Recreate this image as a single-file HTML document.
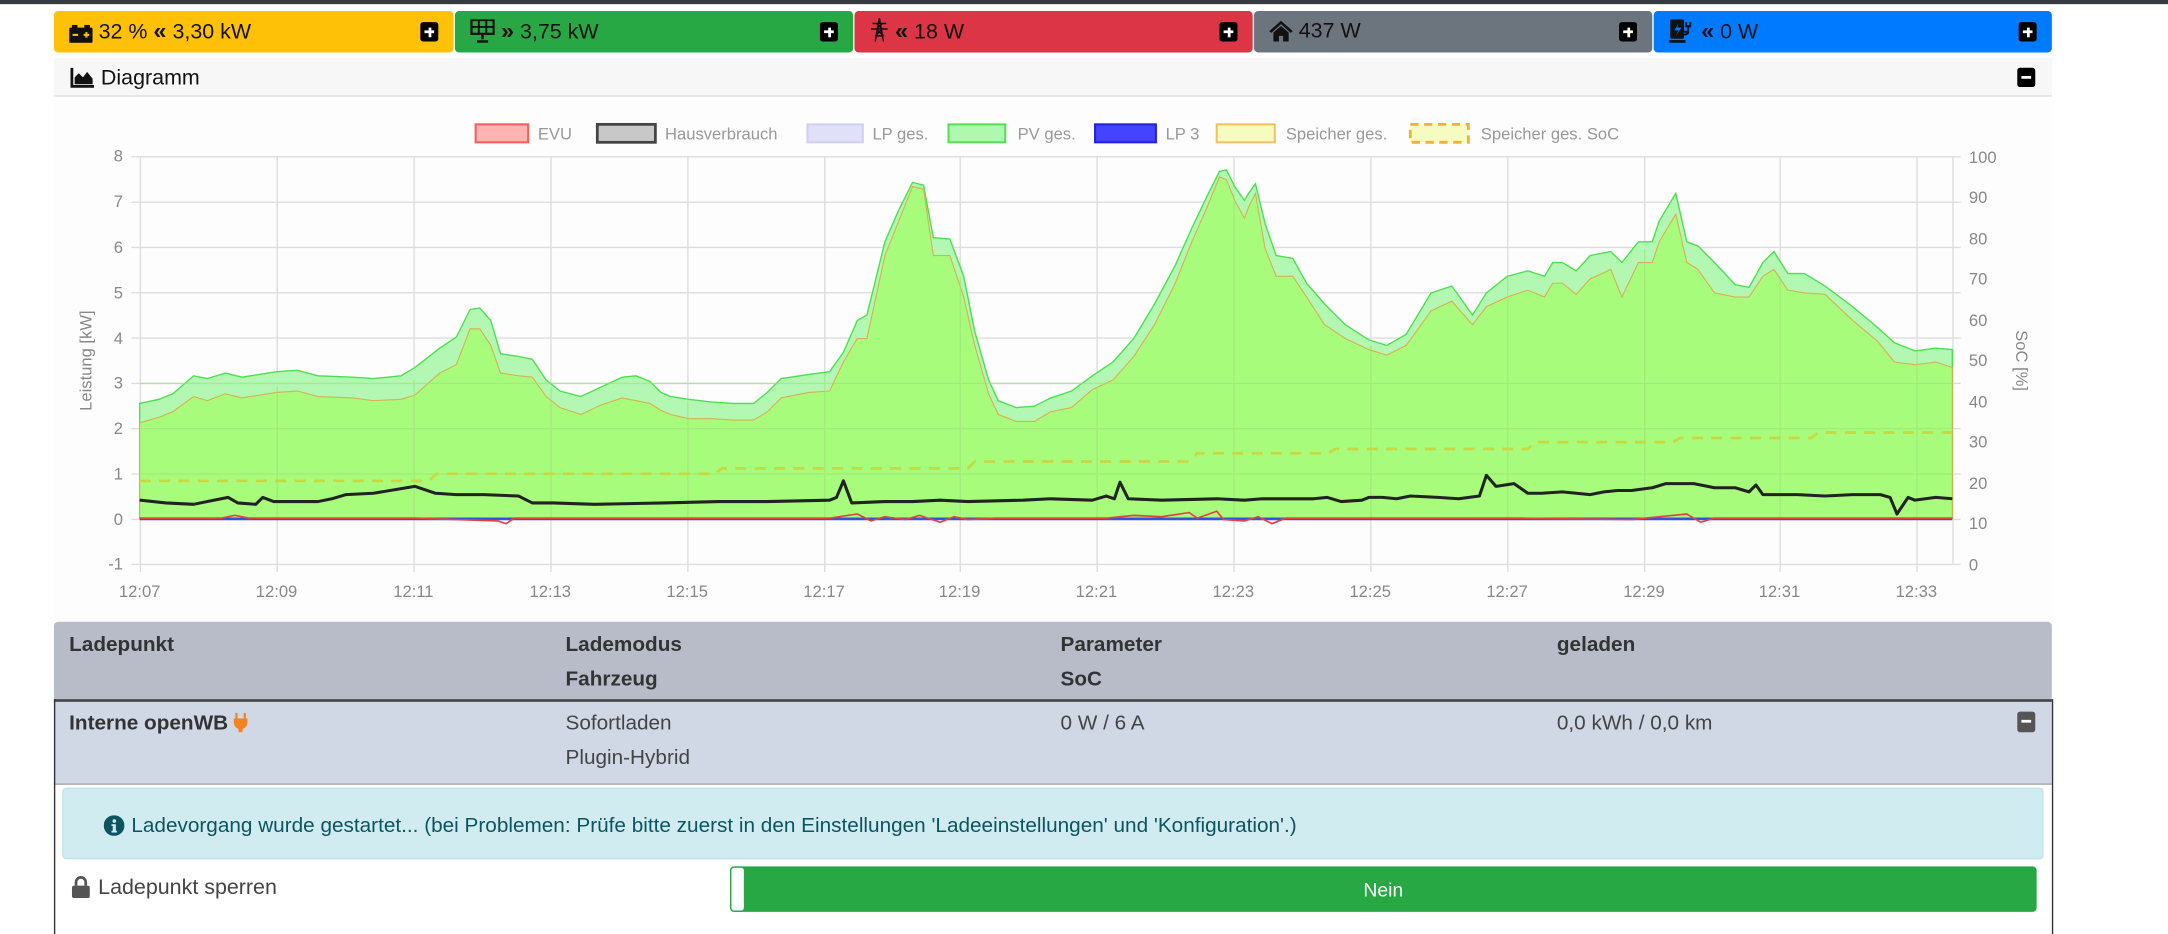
<!DOCTYPE html>
<html><head><meta charset="utf-8">
<style>
*{box-sizing:border-box;margin:0;padding:0}
html,body{width:2168px;height:934px;overflow:hidden;background:#fff;font-family:"Liberation Sans",sans-serif}
#w{position:absolute;left:0;top:0;width:1568px;height:676px;transform:scale(1.38265,1.3817);transform-origin:0 0}
.a{position:absolute}
.topbar{left:0;top:0;width:1568px;height:3px;background:#343a40}
.btn{top:8px;height:30px;border-radius:3px;font-size:15.5px;color:#111;line-height:30px;padding-left:11px;white-space:nowrap}
.btn svg{vertical-align:-3px}
.btn b{font-size:17px}
.plus{position:absolute;right:11px;top:8px;width:13px;height:14px;background:#000;border-radius:2px}
.plus:before{content:"";position:absolute;left:3px;top:6px;width:7px;height:2px;background:#fff}
.plus.p:after{content:"";position:absolute;left:5.5px;top:3.5px;width:2px;height:7px;background:#fff}
.th{font-weight:bold;color:#333;font-size:15px}
.td{color:#444;font-size:15px}
</style></head><body><div id="w">
<div class="a topbar"></div>

<div class="a btn" style="left:39px;width:289px;background:#ffc107">
<svg width="17" height="13" viewBox="0 0 17 13"><rect x="0" y="2" width="17" height="11" rx="1" fill="#111"/><rect x="2" y="0" width="4" height="3" fill="#111"/><rect x="11" y="0" width="4" height="3" fill="#111"/><rect x="2.5" y="6.5" width="4" height="1.5" fill="#ffc107"/><rect x="10.5" y="6.5" width="4" height="1.5" fill="#ffc107"/><rect x="11.75" y="5.25" width="1.5" height="4" fill="#ffc107"/></svg> 32 % <b>«</b> 3,30 kW<div class="plus p"></div></div>
<div class="a btn" style="left:329px;width:288px;background:#28a745">
<svg width="18" height="17" viewBox="0 0 18 17"><rect x="1" y="0.5" width="16" height="10" fill="none" stroke="#111" stroke-width="1.6"/><path d="M6.3 0.5v10M11.7 0.5v10M1 5.5h16" stroke="#111" stroke-width="1.4"/><path d="M9 10.5v4M5 16h8" stroke="#111" stroke-width="1.8"/></svg> <b>»</b> 3,75 kW<div class="plus p"></div></div>
<div class="a btn" style="left:618px;width:288px;background:#dc3545">
<svg width="14" height="18" viewBox="0 0 14 18"><path d="M7 0L4 17M7 0l3 17M2 4h10M1 8h12M5 4l4 4M9 4L5 8M5 8l5 5M9 8l-5 5M4 13h6" stroke="#111" stroke-width="1.1" fill="none"/></svg> <b>«</b> 18 W<div class="plus p"></div></div>
<div class="a btn" style="left:907px;width:288px;background:#6c757d">
<svg width="17" height="15" viewBox="0 0 17 15"><path d="M8.5 0L0 7.5l1.5 1.3L8.5 2.5l7 6.3L17 7.5z" fill="#111"/><path d="M3 8.5V15h4v-4h3v4h4V8.5L8.5 3.8z" fill="#111"/></svg> 437 W<div class="plus p"></div></div>
<div class="a btn" style="left:1196px;width:288px;background:#007bff">
<svg width="19" height="17" viewBox="0 0 19 17"><rect x="1" y="0" width="10" height="14" rx="1" fill="#111"/><rect x="0" y="15" width="12" height="2" fill="#111"/><path d="M7 3L4 8h3l-2 4 4-6H6z" fill="#007bff"/><path d="M11 9h3v-4M14 5h-1.5v-3M14 5h1.5v-3M14 5v4c0 2-2 2-3 2" stroke="#111" stroke-width="1.4" fill="none"/></svg> <b>«</b> 0 W<div class="plus p"></div></div>

<div class="a" style="left:39px;top:42px;width:1445px;height:28px;background:#f7f7f7;border-bottom:1px solid #ddd"></div>
<svg class="a" style="left:51px;top:49px" width="17" height="15" viewBox="0 0 17 15"><path d="M1 0v13.5h16" stroke="#111" stroke-width="2" fill="none"/><path d="M3 12V7l3-3 3 3 3-4 4 5v4z" fill="#111"/></svg>
<div class="a" style="left:73px;top:48px;font-size:15.5px;color:#111">Diagramm</div>
<div class="a plus" style="left:1459px;top:49px;right:auto"></div>

<div class="a" style="left:39px;top:70px;width:1445px;height:380px;background:#fdfdfd"></div>
<svg class="a" style="left:0;top:0" width="1568" height="676" viewBox="0 0 1568 676" font-family="Liberation Sans, sans-serif">
<g font-size="12" fill="#999">
<rect x="344" y="90" width="38" height="13" fill="#ffb3b3" stroke="#f06060" stroke-width="1.5"/><text x="389" y="101">EVU</text>
<rect x="432" y="90" width="42" height="13" fill="#c8c8c8" stroke="#444" stroke-width="2"/><text x="481" y="101">Hausverbrauch</text>
<rect x="584" y="90" width="40" height="13" fill="#e0e0f8" stroke="#d0d0f0" stroke-width="1.5"/><text x="631" y="101">LP ges.</text>
<rect x="686" y="90" width="41" height="13" fill="#b0f8b0" stroke="#55e055" stroke-width="1.5"/><text x="736" y="101">PV ges.</text>
<rect x="792" y="90" width="44" height="13" fill="#4444ff" stroke="#2222dd" stroke-width="1.5"/><text x="843" y="101">LP 3</text>
<rect x="880" y="90" width="42" height="13" fill="#f6fcc0" stroke="#f5c060" stroke-width="1.5"/><text x="930" y="101">Speicher ges.</text>
<rect x="1020" y="90" width="42" height="13" fill="#f6fcc0" stroke="#f5b030" stroke-width="2" stroke-dasharray="6,4"/><text x="1071" y="101">Speicher ges. SoC</text>
</g>
<g stroke="#ddd" stroke-width="1">
<path d="M95 113.5H1412M95 146.3H1412M95 179.1H1412M95 211.9H1412M95 244.7H1412M95 277.5H1412M95 310.3H1412M95 343.1H1412M95 375.9H1412M95 408.5H1412M1412 113.5h6M1412 146.3h6M1412 179.1h6M1412 211.9h6M1412 244.7h6M1412 277.5h6M1412 310.3h6M1412 343.1h6M1412 375.9h6M1412 408.5h6"/>
<path d="M101.5 113V414M200.5 113V414M299.5 113V414M398.5 113V414M497.5 113V414M596.5 113V414M694.5 113V414M793.5 113V414M892.5 113V414M991.5 113V414M1090.5 113V414M1189.5 113V414M1287.5 113V414M1386.5 113V414M1412.5 113V408"/>
</g>
<polygon fill="#b2f8b2" stroke="#4ce04c" stroke-width="1" points="101,375 101,292 115,289 125,285 140,272 150,274 163,270 175,273 200,269 215,268 230,272 255,273 270,274 290,272 300,266 318,252 330,244 340,224 347,223 355,232 362,256 375,258 385,260 395,275 405,283 420,287 435,280 450,273 460,272 470,276 478,284 485,287 498,289 515,291 530,292 545,292 555,284 565,274 585,271 600,269 610,255 620,232 627,228 640,175 650,152 660,132 668,134 675,172 687,173 697,200 705,240 715,275 722,290 735,295 748,294 760,288 775,283 790,272 805,262 820,245 835,220 850,192 862,165 873,142 882,124 887,123 893,135 900,145 903,140 908,133 915,162 923,185 935,187 945,205 958,220 973,235 990,246 1003,250 1017,242 1035,212 1050,207 1065,228 1075,212 1090,200 1105,196 1117,200 1123,190 1130,190 1140,196 1150,185 1165,182 1173,190 1185,175 1195,175 1200,160 1212,140 1220,175 1228,178 1240,190 1255,206 1265,208 1275,190 1283,182 1293,198 1305,198 1320,207 1340,222 1358,237 1370,248 1385,254 1400,252 1412,253 1412,375"/>
<polygon fill="#a8fc7c" stroke="#d8b050" stroke-width="0.8" points="101,375 101,306 115,302 125,298 140,287 150,290 163,285 175,288 200,284 215,283 230,287 255,288 270,290 290,289 300,286 318,270 330,264 340,238 347,238 355,250 362,270 375,272 385,273 395,287 405,295 420,300 435,293 450,288 460,290 470,292 478,297 485,300 498,303 515,303 530,304 545,304 555,298 565,288 585,284 600,283 610,262 620,245 627,245 640,185 650,160 660,135 668,137 675,185 687,185 697,215 705,250 715,285 722,300 735,305 748,305 760,298 775,295 790,282 805,275 820,258 835,235 850,205 862,175 873,150 882,128 887,130 893,145 900,158 903,150 908,140 915,180 923,200 935,200 945,215 958,235 973,245 990,253 1003,257 1017,250 1035,225 1050,218 1065,235 1075,222 1090,215 1105,210 1117,215 1123,205 1130,205 1140,213 1150,202 1165,195 1173,215 1185,190 1195,190 1200,175 1212,155 1220,190 1228,195 1240,212 1255,215 1265,215 1275,200 1283,195 1293,210 1305,212 1320,213 1340,232 1358,247 1370,262 1385,264 1400,262 1412,266 1412,375"/>
<g stroke="#9fe07a" stroke-width="1" opacity="0.6">
<path d="M101 343.1H1412M101 310.3H1412M101 277.5H1412M200.5 280V375M299.5 275V375M398.5 280V375M497.5 290V375M596.5 270V375M694.5 200V375M793.5 280V375M892.5 140V375M991.5 250V375M1090.5 200V375M1189.5 180V375M1287.5 200V375M1386.5 255V375"/>
</g>
<path fill="none" stroke="#c8d840" stroke-width="2" stroke-dasharray="8,6" d="M101 348H310L316 343H517L522 339H700L705 334H860L866 328H960L966 325H1105L1110 320H1210L1215 317H1310L1315 313H1412"/>
<path d="M101 375.5H1412" stroke="#3355dd" stroke-width="2"/>
<polyline fill="none" stroke="#e84040" stroke-width="1.2" points="101,375 160,375 170,373 180,375 260,375 300,375 360,377 366,379 372,375 560,375 600,375 620,372 630,377 640,374 655,376 665,373 680,378 690,374 700,376 720,375 800,375 820,373 840,374 860,371 866,375 880,370 885,376 900,377 910,374 920,379 930,375 940,375 1000,375 1100,375 1180,376 1220,372 1230,378 1240,375 1412,375"/>
<polyline fill="none" stroke="#222" stroke-width="2.2" stroke-linejoin="round" points="101,362 120,364 140,365 155,362 165,360 172,364 185,365 190,360 198,363 230,363 240,361 250,358 270,357 300,352 315,357 330,358 350,358 375,359 385,364 400,364 430,365 480,364 520,363 555,363 600,362 605,360 610,348 616,364 640,363 660,363 680,362 700,363 740,362 760,361 790,362 800,359 806,361 810,349 816,361 840,362 880,361 900,362 913,361 950,361 960,360 970,363 985,362 990,360 1000,360 1010,361 1020,359 1040,360 1055,361 1070,359 1075,344 1082,352 1095,350 1105,357 1115,357 1130,356 1150,358 1160,356 1170,355 1180,355 1195,353 1205,350 1225,350 1240,353 1255,353 1265,356 1270,351 1275,358 1300,358 1320,359 1340,358 1360,358 1367,360 1372,372 1380,360 1385,362 1400,360 1412,361"/>
<g font-size="12" fill="#888" text-anchor="end">
<text x="89" y="117">8</text><text x="89" y="150">7</text><text x="89" y="183">6</text><text x="89" y="216">5</text><text x="89" y="249">4</text><text x="89" y="281">3</text><text x="89" y="314">2</text><text x="89" y="347">1</text><text x="89" y="380">0</text><text x="89" y="412">-1</text>
</g>
<g font-size="12" fill="#888">
<text x="1424" y="118">100</text><text x="1424" y="147">90</text><text x="1424" y="177">80</text><text x="1424" y="206">70</text><text x="1424" y="236">60</text><text x="1424" y="265">50</text><text x="1424" y="295">40</text><text x="1424" y="324">30</text><text x="1424" y="354">20</text><text x="1424" y="383">10</text><text x="1424" y="413">0</text>
</g>
<g font-size="12" fill="#888" text-anchor="middle">
<text x="101" y="432">12:07</text><text x="200" y="432">12:09</text><text x="299" y="432">12:11</text><text x="398" y="432">12:13</text><text x="497" y="432">12:15</text><text x="596" y="432">12:17</text><text x="694" y="432">12:19</text><text x="793" y="432">12:21</text><text x="892" y="432">12:23</text><text x="991" y="432">12:25</text><text x="1090" y="432">12:27</text><text x="1189" y="432">12:29</text><text x="1287" y="432">12:31</text><text x="1386" y="432">12:33</text>
<text transform="translate(66,261) rotate(-90)">Leistung [kW]</text>
<text transform="translate(1458,261) rotate(90)">SoC [%]</text>
</g>
</svg>

<div class="a" style="left:39px;top:450px;width:1445px;height:56px;background:#b7bcc8;border-radius:3px 3px 0 0"></div>
<div class="a th" style="left:50px;top:458px">Ladepunkt</div>
<div class="a th" style="left:409px;top:458px">Lademodus</div>
<div class="a th" style="left:767px;top:458px">Parameter</div>
<div class="a th" style="left:1126px;top:458px">geladen</div>
<div class="a th" style="left:409px;top:483px">Fahrzeug</div>
<div class="a th" style="left:767px;top:483px">SoC</div>
<div class="a" style="left:39px;top:506px;width:1445px;height:2px;background:#444"></div>
<div class="a" style="left:39px;top:508px;width:1445px;height:60px;background:#d0d8e6;border-bottom:1px solid #aaa"></div>
<div class="a" style="left:39px;top:506px;width:1px;height:170px;background:#333"></div>
<div class="a" style="left:1484px;top:506px;width:1px;height:170px;background:#333"></div>
<div class="a th" style="left:50px;top:515px">Interne openWB <svg width="10" height="14" viewBox="0 0 10 14" style="vertical-align:-2px"><path d="M2 0v4M8 0v4" stroke="#f58220" stroke-width="1.6"/><path d="M0 4h10v3a5 5 0 0 1-3.5 4.5V14h-3v-2.5A5 5 0 0 1 0 7z" fill="#f58220"/></svg></div>
<div class="a td" style="left:409px;top:515px">Sofortladen</div>
<div class="a td" style="left:409px;top:540px">Plugin-Hybrid</div>
<div class="a td" style="left:767px;top:515px">0 W / 6 A</div>
<div class="a td" style="left:1126px;top:515px">0,0 kWh / 0,0 km</div>
<div class="a plus" style="left:1459px;top:515px;right:auto;background:#555;height:15px"></div>

<div class="a" style="left:45px;top:570px;width:1433px;height:52px;background:#d1ecf1;border:1px solid #bee5eb;border-radius:3px"></div>
<svg class="a" style="left:75px;top:590px" width="15" height="15" viewBox="0 0 16 16"><circle cx="8" cy="8" r="8" fill="#0c5460"/><rect x="7" y="7" width="2.4" height="5.5" fill="#d1ecf1"/><rect x="6" y="12" width="4.2" height="1.4" fill="#d1ecf1"/><rect x="6" y="7" width="2" height="1.3" fill="#d1ecf1"/><circle cx="8.2" cy="4.5" r="1.4" fill="#d1ecf1"/></svg>
<div class="a" style="left:95px;top:589px;font-size:15px;color:#0c5460;white-space:nowrap">Ladevorgang wurde gestartet... (bei Problemen: Prüfe bitte zuerst in den Einstellungen 'Ladeeinstellungen' und 'Konfiguration'.)</div>

<svg class="a" style="left:52px;top:634px" width="13" height="16" viewBox="0 0 13 16"><path d="M3 7V4.5a3.5 3.5 0 0 1 7 0V7" stroke="#555" stroke-width="2" fill="none"/><rect x="0" y="7" width="13" height="9" rx="1.5" fill="#555"/></svg>
<div class="a" style="left:71px;top:634px;font-size:15.5px;color:#444">Ladepunkt sperren</div>
<div class="a" style="left:528px;top:627px;width:945px;height:33px;background:#28a745;border-radius:3px"></div>
<div class="a" style="left:528px;top:627px;width:11px;height:33px;background:#fff;border:1px solid #28a745;border-radius:3px"></div>
<div class="a" style="left:528px;top:636px;width:945px;text-align:center;color:#fff;font-size:14px">Nein</div>
</div></body></html>
